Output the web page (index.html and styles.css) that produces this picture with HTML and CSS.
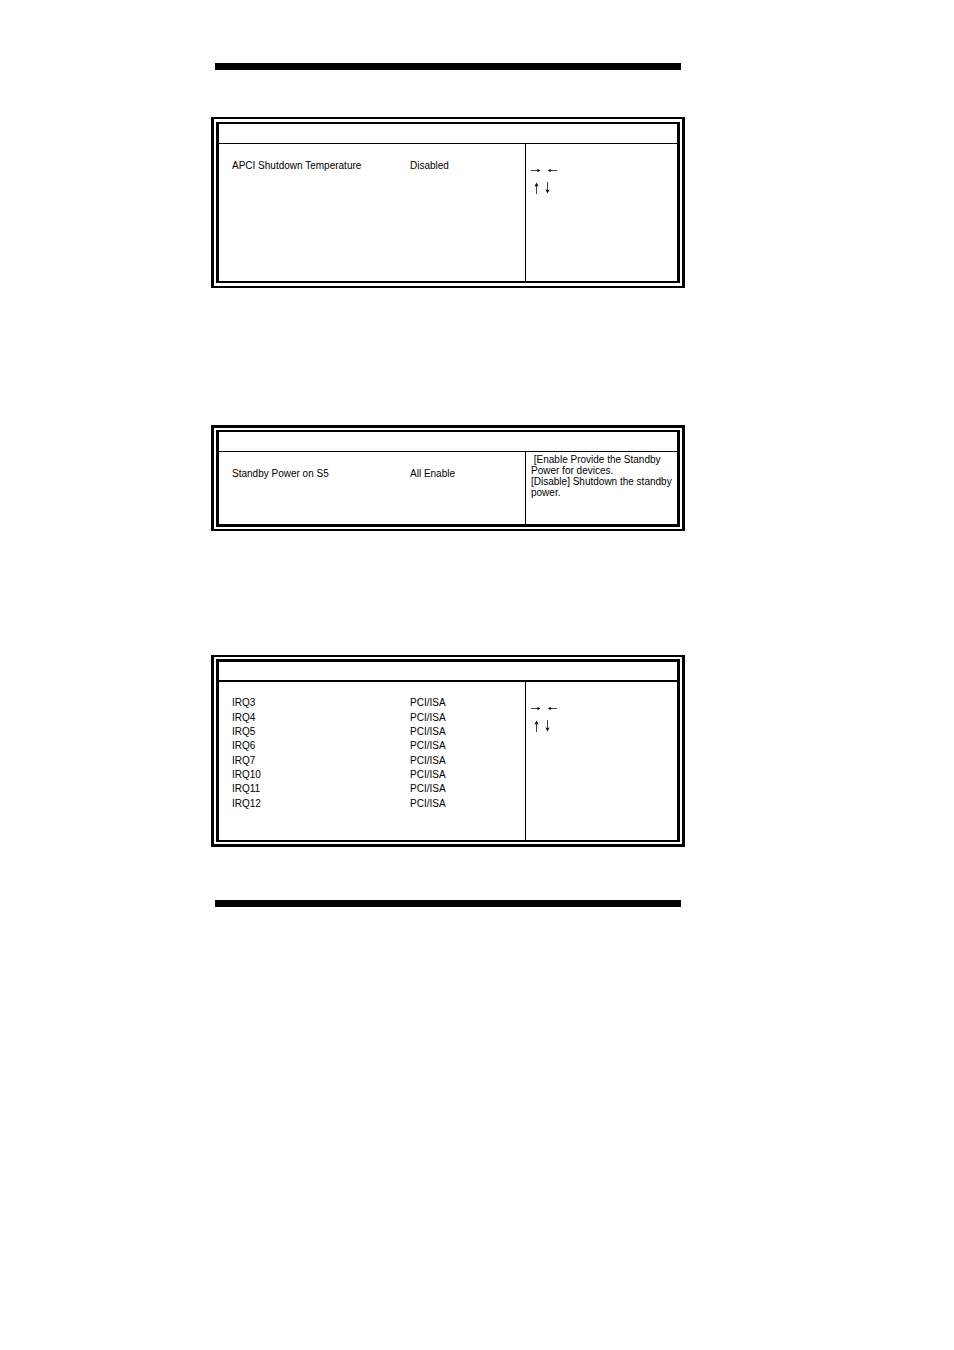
FILE: index.html
```html
<!DOCTYPE html>
<html lang="en">
    <head>
        <meta charset="UTF-8">
        <meta name="viewport" content="width=device-width, initial-scale=1"/>
        <title>BIOS Setup</title>
        <link rel="stylesheet" href="styles.css">
    </head>
    <body>
        <!-- Arrow key icons -->
        <svg class="defs" aria-hidden="true">
            <symbol id="right" viewBox="0 0 10 18">
                <path class="line" d="M0 8.5H8"/>
                <path class="head" d="M6.5 6.8L9.3 8.5L6.5 10.2Z"/>
            </symbol>
            <symbol id="left" viewBox="0 0 10 18">
                <path class="line" d="M1 8.5H9"/>
                <path class="head" d="M2.7 6.8L0 8.5L2.7 10.2Z"/>
            </symbol>
            <symbol id="up" viewBox="0 0 5 18">
                <path class="line" d="M2.5 4V14"/>
                <path class="head" d="M0.4 6.8L2.5 2.4L4.6 6.8L2.5 5.8Z"/>
            </symbol>
            <symbol id="down" viewBox="0 0 5 18">
                <path class="line" d="M2.5 2V12"/>
                <path class="head" d="M0.4 9.2L2.5 13.6L4.6 9.2L2.5 10.2Z"/>
            </symbol>
        </svg>
        <main class="sheet">
            <hr class="rule">
            <section class="panel temperature">
                <div class="inner">
                    <div class="title"></div>
                    <div class="content">
                        <table class="settings">
                            <tr><th scope="row">APCI Shutdown Temperature</th><td>Disabled</td></tr>
                        </table>
                        <div class="help keys">
                            <div class="across">
                                <svg><use href="#right"/></svg>
                                <svg><use href="#left"/></svg>
                            </div>
                            <div class="updown">
                                <svg><use href="#up"/></svg>
                                <svg><use href="#down"/></svg>
                            </div>
                        </div>
                    </div>
                </div>
            </section>
            <section class="panel standby">
                <div class="inner">
                    <div class="title"></div>
                    <div class="content">
                        <table class="settings">
                            <tr><th scope="row">Standby Power on S5</th><td>All Enable</td></tr>
                        </table>
                        <div class="help">
                            <p>&nbsp;[Enable Provide the Standby<br>Power for devices.</p>
                            <p>[Disable] Shutdown the standby<br>power.</p>
                        </div>
                    </div>
                </div>
            </section>
            <section class="panel irq">
                <div class="inner">
                    <div class="title"></div>
                    <div class="content">
                        <table class="settings">
                            <tr><th scope="row">IRQ3</th><td>PCI/ISA</td></tr>
                            <tr><th scope="row">IRQ4</th><td>PCI/ISA</td></tr>
                            <tr><th scope="row">IRQ5</th><td>PCI/ISA</td></tr>
                            <tr><th scope="row">IRQ6</th><td>PCI/ISA</td></tr>
                            <tr><th scope="row">IRQ7</th><td>PCI/ISA</td></tr>
                            <tr><th scope="row">IRQ10</th><td>PCI/ISA</td></tr>
                            <tr><th scope="row">IRQ11</th><td>PCI/ISA</td></tr>
                            <tr><th scope="row">IRQ12</th><td>PCI/ISA</td></tr>
                        </table>
                        <div class="help keys">
                            <div class="across">
                                <svg><use href="#right"/></svg>
                                <svg><use href="#left"/></svg>
                            </div>
                            <div class="updown">
                                <svg><use href="#up"/></svg>
                                <svg><use href="#down"/></svg>
                            </div>
                        </div>
                    </div>
                </div>
            </section>
            <hr class="rule">
        </main>
    </body>
</html>
```
FILE: styles.css
```css
*{
    box-sizing: border-box;
}
body{
    margin: 0;
    background-color: white;
    color: black;
    font-family: "Liberation Sans", Arial, sans-serif;
    font-size: 10px;
    line-height: 14px;
}
p{
    margin: 0;
}
.defs{
    position: absolute;
    width: 0;
    height: 0;
}
.sheet{
    max-width: 474px;
    margin-left: 211px;
    padding: 63px 0;
}
.rule{
    height: 7px;
    margin: 0 4px;
    border: 0;
    background-color: black;
}
.panel{
    border: solid black;
    border-width: 2px 3px;
    padding: 3px 2px;
}
.inner{
    border: solid black;
    border-width: 2px 3px;
}
.title{
    height: 20px;
    border-bottom: 1px solid black;
}
.content{
    display: grid;
    grid-template-columns: minmax(0, 1fr) 152px;
}
.temperature{
    margin-top: 47px;
}
.temperature .content{
    min-height: 137px;
}
.standby{
    margin-top: 137px;
    border-top-width: 3px;
    padding: 2px;
}
.standby .inner{
    border-bottom-width: 3px;
}
.standby .content{
    min-height: 72px;
}
.irq{
    margin-top: 124px;
    border-bottom-width: 3px;
    padding: 2px;
}
.irq .inner{
    border-top-width: 3px;
}
.irq .title{
    border-bottom-width: 2px;
}
.irq .content{
    min-height: 158px;
}
.irq .settings{
    height: 115px;
    margin-top: 14px;
}
.irq + .rule{
    margin-top: 53px;
}
.settings{
    width: 100%;
    margin-top: 15px;
    align-self: start;
    border-collapse: collapse;
    table-layout: fixed;
}
.settings th, .settings td{
    padding: 0;
    font-weight: normal;
    text-align: left;
}
.settings th{
    width: 191px;
    padding-left: 13px;
}
.help{
    border-left: 1px solid black;
    padding: 2px 0 0 5px;
    line-height: 11px;
}
.keys{
    padding-top: 18px;
}
.across, .updown{
    display: flex;
}
.across{
    gap: 7px;
}
.updown{
    gap: 6px;
    padding-left: 3px;
}
.keys svg{
    width: 10px;
    height: 18px;
}
.updown svg{
    width: 5px;
}
.line{
    fill: none;
    stroke: #444;
    stroke-width: 1;
}
.head{
    fill: black;
}
```
